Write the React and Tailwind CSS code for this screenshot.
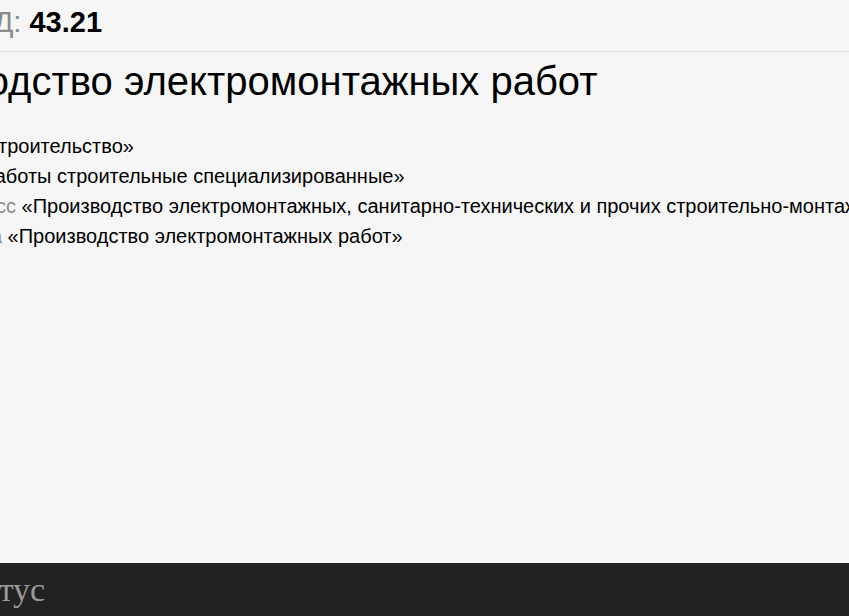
export default function App() {
  const rows = [
    ["F", "Раздел", "«Строительство»"],
    ["43", "Класс", "«Работы строительные специализированные»"],
    ["43.2", "Подкласс", "«Производство электромонтажных, санитарно-технических и прочих строительно-монтажных работ»"],
    ["43.21", "Группа", "«Производство электромонтажных работ»"],
  ];
  return (
    <div className="w-[849px] h-[616px] overflow-hidden bg-[#f6f6f6] flex flex-col" style={{ fontFamily: '"Liberation Sans", Arial, sans-serif' }}>
      <div className="flex-1 overflow-hidden">
        <div className="h-[52px] border-b border-[#e2e2e2] flex items-center pb-[6px] whitespace-nowrap">
          <div className="-ml-[85px] text-[29px] leading-none">
            <span className="text-[#8a8a8a]">ОКВЭД: </span>
            <span className="font-bold text-black">43.21</span>
          </div>
        </div>
        <h1 className="-ml-[148px] whitespace-nowrap text-[40px] leading-[56px] mt-[1px] text-black">Производство электромонтажных работ</h1>
        <div className="-ml-[117px] whitespace-nowrap mt-[22px] flex flex-col">
          {rows.map(([c, l, t]) => (
            <div key={l} className="text-[20px] leading-[30px] text-black">
              <span className="text-[#8a8a8a]">{c} {l} </span>
              <span>{t}</span>
            </div>
          ))}
        </div>
      </div>
      <div className="h-[53px] bg-[#222222] flex items-center whitespace-nowrap overflow-hidden">
        <div className="-ml-[53px] text-[34px] text-[#9a9a9a]" style={{ fontFamily: '"Liberation Serif", "Times New Roman", serif' }}>Статус</div>
      </div>
    </div>
  );
}
